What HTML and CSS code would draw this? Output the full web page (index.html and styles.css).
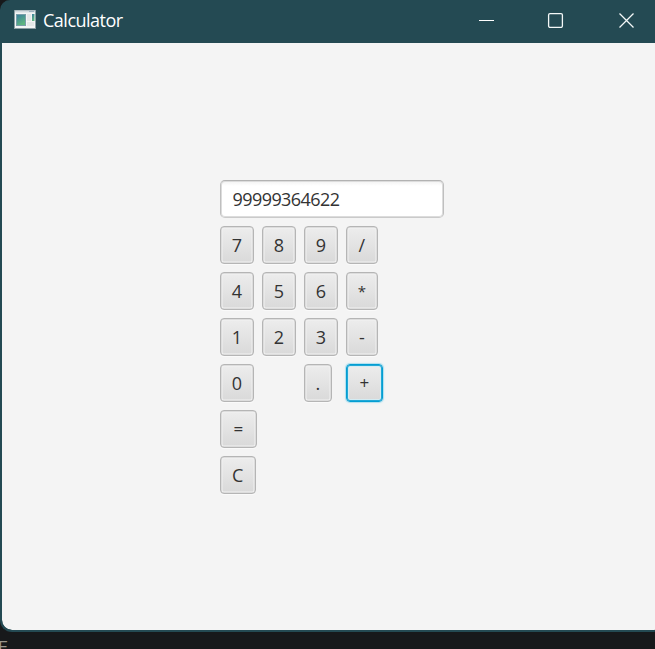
FILE: index.html
```html
<!DOCTYPE html>
<html lang="en">
<head>
<meta charset="utf-8">
<title>Calculator</title>
<link rel="stylesheet" href="styles.css">
</head>
<body>
<div class="window">
  <header class="titlebar">
    <svg class="app-icon" width="22" height="19" viewBox="0 0 22 19">
      <defs><linearGradient id="g" x1="0" y1="0" x2="0.5" y2="1"><stop offset="0" stop-color="#397c9f"/><stop offset="1" stop-color="#60b77e"/></linearGradient></defs>
      <rect x=".5" y=".5" width="21" height="18" fill="#f4f5f5" stroke="#8b9da3"/>
      <path d="M1 1.5h20" stroke="#d3dbe0" stroke-width="2"/>
      <path d="M15 1.5h5" stroke="#9eb2bf"/>
      <rect x="2.5" y="4.5" width="9" height="11" fill="url(#g)" stroke="#799eaa"/>
      <path d="M13 4h4v7h-4zM13 12h7v4h-7z" fill="#e5e8e8"/>
      <rect x="18" y="4" width="2.5" height="7" fill="url(#g)"/>
    </svg>
    <span class="title">Calculator</span>
    <svg class="controls" width="156" height="16" viewBox="0 0 156 16" fill="none" stroke="#f4f8f8">
      <path d="M0 8.5h15" stroke="#fff"/>
      <rect x="69.6" y="1.6" width="13.8" height="13.8" rx="1.4" stroke-width="1.3"/>
      <path d="M140.5 1.5l14 14M154.5 1.5l-14 14" stroke-width="1.3"/>
    </svg>
  </header>
  <main class="content">
    <div class="keypad">
      <input class="display" type="text" value="99999364622" aria-label="Result">
      <button>7</button><button>8</button><button>9</button><button class="op">/</button>
      <button>4</button><button>5</button><button>6</button><button class="op star">*</button>
      <button>1</button><button>2</button><button>3</button><button class="op">-</button>
      <button>0</button><button class="dot">.</button><button class="plus">+</button>
      <button class="equals">=</button>
      <button class="clear">C</button>
    </div>
  </main>
</div>
<div class="backdrop-text">E</div>
</body>
</html>
```
FILE: styles.css
```css
* { box-sizing: border-box; }
body {
  margin: 0;
  height: 649px;
  overflow: hidden;
  background: #17191b;
  font-family: "Open Sans", "Noto Sans", sans-serif;
}
.window {
  width: 656px;
  height: 632px;
  display: flex;
  flex-direction: column;
  background: #244a53;
  border: solid #244a53;
  border-width: 0 0 2px 2px;
  border-radius: 10px 0 3px 12px;
  overflow: hidden;
}
.titlebar {
  flex: 0 0 43px;
  display: flex;
  align-items: flex-start;
  padding: 0 21px 0 12px;
  color: #fff;
}
.app-icon { margin-top: 10px; }
.title {
  margin-left: 7px;
  font-size: 18px;
  line-height: 41px;
  letter-spacing: -0.5px;
}
.controls { margin: 12px 0 0 auto; }
.content {
  flex: 1;
  padding: 137px 0 0 218px;
  background: #f4f4f4;
  border-radius: 0 0 0 10px;
}
.keypad {
  display: grid;
  grid-template-columns: 34px 34px 34px 98px;
  grid-auto-rows: 38px;
  gap: 8px;
}
.display, button {
  font: 18px/24px "Open Sans", "Noto Sans", sans-serif;
  letter-spacing: -0.57px;
  color: #333;
  margin: 0;
  outline: none;
}
.display {
  grid-column: 1 / -1;
  width: 224px;
  height: 38px;
  padding: 0 11px 1px 11.5px;
  background: linear-gradient(#f2f2f2, #fff 5px);
  border: 1px solid #c4c4c4;
  border-color: #b2b2b2 #bfbfbf #cacaca;
  border-radius: 5px;
  box-shadow: inset 0 0 0 1px #dcdcdc;
}
button {
  width: 34px;
  height: 38px;
  padding: 0 1px 1px 0;
  border: 1px solid #b5b5b5;
  border-radius: 4px;
  background: linear-gradient(#ededed, #d9d9d9);
  box-shadow: inset 0 0 0 0.5px #c9c9c9, inset 0 0 0 1.5px #f1f1f1, 0 1px #fafafa;
}
.op { width: 32px; }
.star { font-size: 15px; }
.dot { grid-column: 3; width: 28px; }
.plus {
  width: 37px;
  border-color: #039ed3;
  box-shadow: inset 0 0 0 1px #22a8d6, inset 0 0 0 2px #d4ecf3, 0 0 0 1px #b5e1ef, 0 0 3px #b8e4f2;
}
.plus, .equals { font-size: 17px; padding-bottom: 0; }
.equals { grid-column: 1; width: 37px; }
.clear { grid-column: 1; width: 36px; }
.backdrop-text {
  height: 17px;
  padding-top: 6px;
  margin-left: -2px;
  overflow: hidden;
  color: #99958c;
  font: 17px/20px "Liberation Mono", monospace;
}
```
